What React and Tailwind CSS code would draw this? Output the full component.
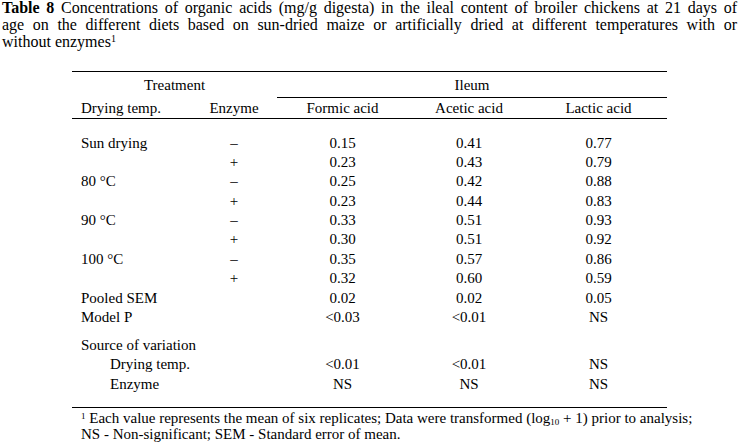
import React from "react";

const rows = [
  ["Sun drying", "–", "0.15", "0.41", "0.77"],
  ["", "+", "0.23", "0.43", "0.79"],
  ["80 °C", "–", "0.25", "0.42", "0.88"],
  ["", "+", "0.23", "0.44", "0.83"],
  ["90 °C", "–", "0.33", "0.51", "0.93"],
  ["", "+", "0.30", "0.51", "0.92"],
  ["100 °C", "–", "0.35", "0.57", "0.86"],
  ["", "+", "0.32", "0.60", "0.59"],
  ["Pooled SEM", "", "0.02", "0.02", "0.05"],
  ["Model P", "", "<0.03", "<0.01", "NS"],
];

const sources = [
  ["Drying temp.", "<0.01", "<0.01", "NS"],
  ["Enzyme", "NS", "NS", "NS"],
];

// column widths follow the picture: 119 | 86 | 131 | 122 | 137
const cols = "grid grid-cols-[119px_86px_131px_122px_137px]";

function Row({ cells }) {
  return (
    <div className={`${cols} h-[19.38px] leading-[19.38px]`}>
      <div className="pl-[9px] whitespace-nowrap">{cells[0]}</div>
      <div className="text-center">{cells[1]}</div>
      <div className="text-center">{cells[2]}</div>
      <div className="text-center">{cells[3]}</div>
      <div className="text-center">{cells[4]}</div>
    </div>
  );
}

export default function App() {
  return (
    <div className="w-[741px] h-[442px] bg-white text-black overflow-hidden font-['Liberation_Serif',serif] text-[15px]">
      {/* caption, broken where the reference breaks */}
      <div className="pl-[2px] pr-[4px] -mt-[1px] text-[16px] leading-[17px]">
        <p className="whitespace-nowrap text-justify [text-align-last:justify]">
          <b>Table 8</b> Concentrations of organic acids (mg/g digesta) in the ileal content of broiler chickens at 21 days of
        </p>
        <p className="whitespace-nowrap text-justify [text-align-last:justify]">
          age on the different diets based on sun-dried maize or artificially dried at different temperatures with or
        </p>
        <p className="whitespace-nowrap">
          without enzymes<sup className="text-[10px]">1</sup>
        </p>
      </div>

      <div className="ml-[72px] w-[595px] mt-[21px]">
        <div className="border-t border-black" />

        {/* header */}
        <div className="grid grid-cols-[205px_390px]">
          <div className="h-[26px] leading-[26px] text-center">Treatment</div>
          <div className="h-[26px] leading-[26px] text-center border-b border-black">Ileum</div>
        </div>
        <div className={`${cols} h-[20px] leading-[20px] border-b border-black box-content`}>
          <div className="pl-[9px]">Drying temp.</div>
          <div className="text-center">Enzyme</div>
          <div className="text-center">Formic acid</div>
          <div className="text-center">Acetic acid</div>
          <div className="text-center">Lactic acid</div>
        </div>

        {/* body */}
        <div className="pt-[14.5px]">
          {rows.map((r, i) => (
            <Row key={i} cells={r} />
          ))}
        </div>

        <div className="pt-[8.7px]">
          <div className="h-[19.38px] leading-[19.38px] pl-[9px]">Source of variation</div>
          {sources.map((s, i) => (
            <div key={i} className={`${cols} h-[19.38px] leading-[19.38px]`}>
              <div className="pl-[38px] whitespace-nowrap">{s[0]}</div>
              <div />
              <div className="text-center">{s[1]}</div>
              <div className="text-center">{s[2]}</div>
              <div className="text-center">{s[3]}</div>
            </div>
          ))}
        </div>

        <div className="mt-[13px] border-t border-black" />
        <div className="pl-[9px] leading-[16px] text-[15px] pt-[2px] whitespace-nowrap">
          <p>
            <sup className="text-[9px]">1</sup> Each value represents the mean of six replicates; Data were transformed (log
            <sub className="text-[9px]">10</sub> + 1) prior to analysis;
          </p>
          <p>NS - Non-significant; SEM - Standard error of mean.</p>
        </div>
      </div>
    </div>
  );
}
